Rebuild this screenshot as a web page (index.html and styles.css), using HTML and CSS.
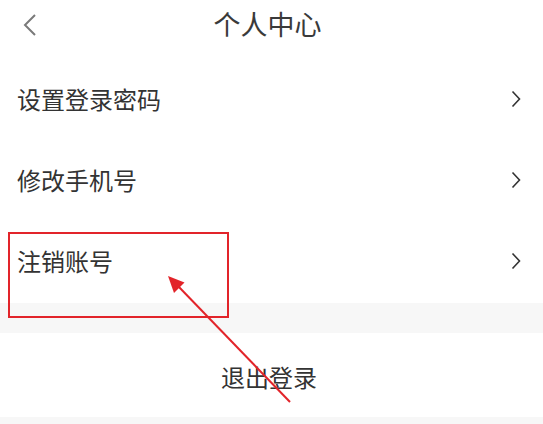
FILE: index.html
```html
<!DOCTYPE html>
<html lang="zh-CN">
<head>
<meta charset="utf-8">
<title>个人中心</title>
<link rel="stylesheet" href="styles.css">
</head>
<body>
<div class="page">
  <header class="header">
    <span class="back">
      <svg width="14" height="22" viewBox="0 0 14 22"><polyline points="12,1 2,11 12,21" fill="none" stroke="#7a7a7a" stroke-width="2"/></svg>
    </span>
    <h1 class="title">个人中心</h1>
    <span></span>
  </header>

  <ul class="menu">
    <li class="item"><span class="label">设置登录密码</span><svg class="chev" width="10" height="18" viewBox="0 0 10 18"><polyline points="1.5,1.5 8.5,9 1.5,16.5" fill="none" stroke="#333" stroke-width="1.6"/></svg></li>
    <li class="item"><span class="label">修改手机号</span><svg class="chev" width="10" height="18" viewBox="0 0 10 18"><polyline points="1.5,1.5 8.5,9 1.5,16.5" fill="none" stroke="#333" stroke-width="1.6"/></svg></li>
    <li class="item"><span class="label">注销账号</span><svg class="chev" width="10" height="18" viewBox="0 0 10 18"><polyline points="1.5,1.5 8.5,9 1.5,16.5" fill="none" stroke="#333" stroke-width="1.6"/></svg></li>
  </ul>

  <div class="gap"></div>

  <div class="logout">退出登录</div>

  <div class="foot"></div>

  <!-- annotation layer: highlight box and pointer arrow -->
  <svg class="marks" width="543" height="424" viewBox="0 0 543 424">
    <rect x="9" y="233" width="219" height="84" fill="none" stroke="#e2242a" stroke-width="2"/>
    <line x1="290" y1="402" x2="178" y2="286" stroke="#e2242a" stroke-width="2"/>
    <polygon points="168,276 184.5,282.5 174,293" fill="#e2242a"/>
  </svg>
</div>
</body>
</html>
```

FILE: styles.css
```css
* { box-sizing: border-box; }

html, body {
  margin: 0;
  padding: 0;
  background: #ffffff;
}

.page {
  position: relative;
  width: 543px;
  height: 424px;
  overflow: hidden;
  font-family: "Noto Sans CJK SC", "Noto Sans", sans-serif;
  color: #333333;
}

.header {
  height: 48px;
  display: grid;
  grid-template-columns: 56px 1fr 64px;
  align-items: center;
}

.back {
  display: flex;
  align-items: center;
  padding-left: 23px;
  padding-top: 1px;
}

.title {
  margin: 0;
  text-align: center;
  font-size: 27px;
  font-weight: 400;
  line-height: 30px;
  color: #3a3a3a;
}

.menu {
  list-style: none;
  margin: 12px 0 0;
  padding: 0;
}

.item {
  height: 81px;
  display: flex;
  align-items: center;
  justify-content: space-between;
  padding: 0 22px 4px 17px;
}

.label {
  font-size: 24px;
  line-height: 28px;
}

.chev {
  margin-top: 0;
}

.gap {
  height: 30px;
  background: #f7f7f7;
}

.logout {
  height: 84px;
  display: flex;
  align-items: center;
  justify-content: center;
  padding: 4px 5px 0 0;
  font-size: 24px;
  line-height: 28px;
}

.foot {
  height: 7px;
  background: #f7f7f7;
}

.marks {
  position: absolute;
  left: 0;
  top: 0;
  pointer-events: none;
}
```
